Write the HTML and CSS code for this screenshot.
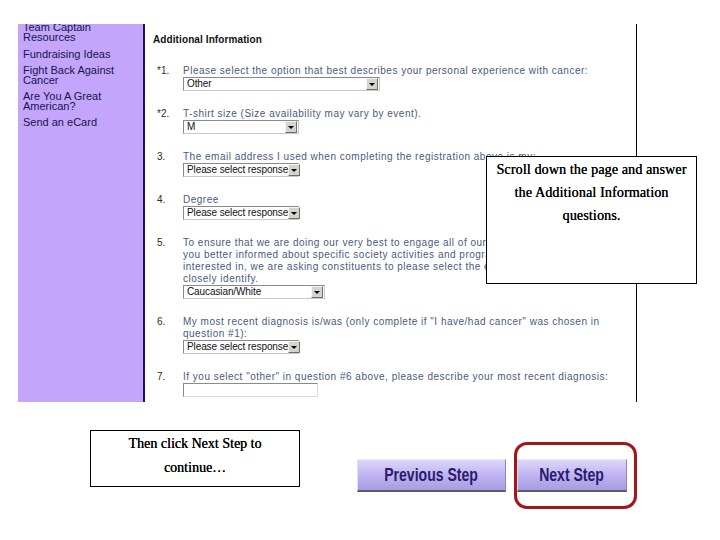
FILE: index.html
```html
<!DOCTYPE html>
<html>
<head>
<meta charset="utf-8">
<link rel="stylesheet" href="styles.css">
</head>
<body>
<div class="page">
  <div class="shot">
    <nav class="sidebar">
      <ul class="links">
        <li>Team Captain<br>Resources</li>
        <li>Fundraising Ideas</li>
        <li>Fight Back Against<br>Cancer</li>
        <li>Are You A Great<br>American?</li>
        <li>Send an eCard</li>
      </ul>
    </nav>
    <main class="form">
      <h2 class="form-title">Additional Information</h2>
      <div class="q q-first">
        <span class="num">*1.</span>
        <div class="qbody">
          <p class="label">Please select the option that best describes your personal experience with cancer:</p>
          <div class="select sel-wide"><span class="val">Other</span><span class="arrow"></span></div>
        </div>
      </div>
      <div class="q">
        <span class="num">*2.</span>
        <div class="qbody">
          <p class="label">T-shirt size (Size availability may vary by event).</p>
          <div class="select sel-small"><span class="val">M</span><span class="arrow"></span></div>
        </div>
      </div>
      <div class="q">
        <span class="num">3.</span>
        <div class="qbody">
          <p class="label">The email address I used when completing the registration above is my:</p>
          <div class="select sel-small"><span class="val">Please select response</span><span class="arrow"></span></div>
        </div>
      </div>
      <div class="q">
        <span class="num">4.</span>
        <div class="qbody">
          <p class="label">Degree</p>
          <div class="select sel-small"><span class="val">Please select response</span><span class="arrow"></span></div>
        </div>
      </div>
      <div class="q">
        <span class="num">5.</span>
        <div class="qbody">
          <p class="label">To ensure that we are doing our very best to engage all of our constituents and keep<br>you better informed about specific society activities and programs you may be<br>interested in, we are asking constituents to please select the ethnicity with which<br>closely identify.</p>
          <div class="select sel-mid"><span class="val">Caucasian/White</span><span class="arrow"></span></div>
        </div>
      </div>
      <div class="q">
        <span class="num">6.</span>
        <div class="qbody">
          <p class="label">My most recent diagnosis is/was (only complete if "I have/had cancer" was chosen in<br>question #1):</p>
          <div class="select sel-small"><span class="val">Please select response</span><span class="arrow"></span></div>
        </div>
      </div>
      <div class="q">
        <span class="num">7.</span>
        <div class="qbody">
          <p class="label">If you select "other" in question #6 above, please describe your most recent diagnosis:</p>
          <div class="textbox"></div>
        </div>
      </div>
    </main>
    <div class="callout callout-top">Scroll down the page and answer<br>the Additional Information<br>questions.</div>
  </div>
  <div class="bottom">
    <div class="callout callout-bottom">Then click Next Step to<br>continue…</div>
    <div class="buttons">
      <span class="step step-prev"><span class="step-text">Previous Step</span></span>
      <div class="next-wrap">
        <span class="step step-next"><span class="step-text">Next Step</span></span>
        <span class="ring"></span>
      </div>
    </div>
  </div>
</div>
</body>
</html>
```
FILE: styles.css
```css
html, body {
  margin: 0;
  padding: 0;
  background: #ffffff;
}

.page {
  width: 720px;
  height: 540px;
  overflow: hidden;
  font-family: "Liberation Sans", Arial, sans-serif;
}

.shot {
  position: relative;
  display: flex;
  margin: 24px 0 0 18px;
  height: 378px;
}

.sidebar {
  width: 125px;
  background: #c3a6fb;
  border-right: 2px solid #2a0d5e;
  overflow: hidden;
}

.links {
  list-style: none;
  margin: -2px 0 0 0;
  padding: 0 0 0 5px;
  font-size: 11px;
  line-height: 10px;
  color: #17134f;
}

.links li {
  margin-bottom: 6px;
}

.links li:first-child {
  margin-bottom: 7px;
}

.form {
  border-right: 1px solid #000000;
  padding: 10px 0 0 8px;
  box-sizing: border-box;
  width: 492px;
  overflow: hidden;
}

.form-title {
  margin: 0;
  font-size: 10px;
  line-height: 12px;
  font-weight: bold;
  color: #111111;
  letter-spacing: 0.1px;
}

.q {
  display: flex;
  margin-top: 17px;
  padding-left: 4px;
}

.q-first {
  margin-top: 19px;
}

.num {
  width: 26px;
  flex: none;
  font-size: 10px;
  line-height: 12px;
  color: #2a2a2a;
}

.qbody {
  display: flex;
  flex-direction: column;
  align-items: flex-start;
}

.label {
  margin: 0;
  font-size: 10px;
  line-height: 12px;
  color: #4a5a7c;
  white-space: nowrap;
  letter-spacing: 0.5px;
}

.select {
  display: flex;
  align-items: center;
  justify-content: space-between;
  height: 14px;
  box-sizing: border-box;
  border: 1px solid #8a8a8a;
  border-right-color: #c8c8c8;
  border-bottom-color: #c8c8c8;
  background: #ffffff;
}

.sel-wide { width: 197px; }
.sel-small { width: 116px; }
.sel-mid { width: 142px; }

.val {
  font-size: 10px;
  line-height: 12px;
  color: #111111;
  padding-left: 3px;
  white-space: nowrap;
  letter-spacing: -0.1px;
}

.arrow {
  position: relative;
  flex: none;
  width: 10px;
  height: 10px;
  margin-right: 1px;
  background: #d6d3cc;
  border: 1px solid;
  border-color: #f4f4f4 #6e6e6e #6e6e6e #f4f4f4;
}

.arrow::after {
  content: "";
  position: absolute;
  left: 2px;
  top: 4px;
  border-left: 3px solid transparent;
  border-right: 3px solid transparent;
  border-top: 3px solid #000000;
}

.textbox {
  width: 135px;
  height: 14px;
  box-sizing: border-box;
  border: 1px solid #dcdcdc;
  border-top-color: #8a8a8a;
  border-left-color: #8a8a8a;
}

.callout {
  background: #ffffff;
  border: 1px solid #000000;
  font-family: "Liberation Serif", "Times New Roman", serif;
  font-size: 14px;
  color: #000000;
  text-align: center;
  text-shadow: 0.25px 0 0 #000000;
  box-sizing: border-box;
}

.callout-top {
  position: absolute;
  left: 468px;
  top: 132px;
  width: 211px;
  height: 128px;
  padding-top: 1px;
  line-height: 23px;
  letter-spacing: 0.15px;
}

.bottom {
  display: flex;
  align-items: flex-start;
  margin: 28px 0 0 90px;
}

.callout-bottom {
  width: 210px;
  height: 57px;
  padding-top: 1px;
  line-height: 24px;
}

.buttons {
  display: flex;
  gap: 11px;
  margin: 29px 0 0 57px;
}

.step {
  display: flex;
  align-items: center;
  justify-content: center;
  height: 33px;
  box-sizing: border-box;
  background: linear-gradient(#ddd6fb, #bdb2ef 55%, #a99ce0);
  border-top: 1px solid #ece8ff;
  border-left: 1px solid #e2dcfb;
  border-right: 1px solid #8c83b8;
  border-bottom: 2px solid #5e5a72;
  padding-bottom: 1px;
}

.step-text {
  display: inline-block;
  white-space: nowrap;
  font-family: "Liberation Sans", Arial, sans-serif;
  font-weight: bold;
  font-size: 18px;
  line-height: 20px;
  color: #2a1a70;
  transform: scaleX(0.78);
}

.step-prev { width: 149px; }
.step-next { width: 110px; }

.next-wrap {
  position: relative;
}

.ring {
  position: absolute;
  left: -3px;
  top: -17px;
  width: 123px;
  height: 67px;
  box-sizing: border-box;
  border: 3px solid #a3161a;
  border-radius: 13px;
}
```
